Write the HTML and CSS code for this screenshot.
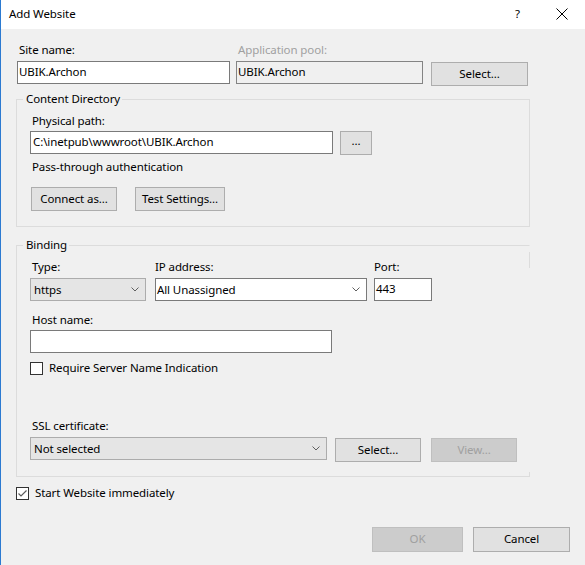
FILE: index.html
```html
<!DOCTYPE html>
<html>
<head>
<meta charset="utf-8">
<link rel="stylesheet" href="styles.css">
</head>
<body>
<div class="window">
  <div class="titlebar">
    <span class="title">Add Website</span>
    <span class="help">?</span>
    <span class="close"><svg width="12" height="12" viewBox="0 0 12 12"><path d="M0.5 0.5 L11.5 11.5 M11.5 0.5 L0.5 11.5" stroke="#000" stroke-width="1" fill="none"/></svg></span>
  </div>
  <div class="body">
    <div class="row-site">
      <div class="field f-site">
        <div class="lbl">Site name:</div>
        <div class="tb w-site">UBIK.Archon</div>
      </div>
      <div class="field f-pool">
        <div class="lbl disabled">Application pool:</div>
        <div class="tb ro w-pool">UBIK.Archon</div>
      </div>
      <div class="btn btn-pool">Select...</div>
    </div>

    <fieldset class="group g-content">
      <legend>Content Directory</legend>
      <div class="group-inner inner-content">
        <div class="lbl">Physical path:</div>
        <div class="path-row">
          <div class="tb w-path">C:\inetpub\wwwroot\UBIK.Archon</div>
          <div class="btn btn-browse">...</div>
        </div>
        <div class="lbl lbl-pass">Pass-through authentication</div>
        <div class="btn-row">
          <div class="btn btn-connect">Connect as...</div>
          <div class="btn btn-test">Test Settings...</div>
        </div>
      </div>
    </fieldset>

    <fieldset class="group g-binding">
      <legend>Binding</legend>
      <div class="group-inner inner-binding">
        <div class="bind-row">
          <div class="field f-type">
            <div class="lbl">Type:</div>
            <div class="combo dd w-type"><span class="combo-text">https</span><svg class="chev" width="8" height="5" viewBox="0 0 8 5"><path d="M0.5 0.5 L4 4 L7.5 0.5" stroke="#606060" fill="none"/></svg></div>
          </div>
          <div class="field f-ip">
            <div class="lbl lbl-tight">IP address:</div>
            <div class="combo edit w-ip"><span class="combo-text">All Unassigned</span><svg class="chev" width="8" height="5" viewBox="0 0 8 5"><path d="M0.5 0.5 L4 4 L7.5 0.5" stroke="#606060" fill="none"/></svg></div>
          </div>
          <div class="field f-port">
            <div class="lbl lbl-tight">Port:</div>
            <div class="tb w-port">443</div>
          </div>
        </div>
        <div class="lbl lbl-host">Host name:</div>
        <div class="tb w-host"></div>
        <div class="check-row check-sni">
          <span class="cb"></span>
          <span class="cb-label">Require Server Name Indication</span>
        </div>
        <div class="lbl lbl-ssl">SSL certificate:</div>
        <div class="ssl-row">
          <div class="combo dd w-ssl"><span class="combo-text">Not selected</span><svg class="chev" width="8" height="5" viewBox="0 0 8 5"><path d="M0.5 0.5 L4 4 L7.5 0.5" stroke="#606060" fill="none"/></svg></div>
          <div class="btn btn-ssl-select">Select...</div>
          <div class="btn disabled-btn btn-view">View...</div>
        </div>
      </div>
    </fieldset>

    <div class="check-row check-start">
      <span class="cb checked"><svg width="11" height="11" viewBox="0 0 11 11"><path d="M1.5 5.5 L4 8 L9.5 2.5" stroke="#5c5c5c" stroke-width="1.2" fill="none"/></svg></span>
      <span class="cb-label">Start Website immediately</span>
    </div>

    <div class="footer">
      <div class="btn disabled-btn btn-ok">OK</div>
      <div class="btn btn-cancel">Cancel</div>
    </div>
  </div>
</div>
</body>
</html>
```
FILE: styles.css
```css
* { box-sizing: border-box; }
html, body { margin: 0; padding: 0; }
body {
  font-family: "Noto Sans", "Open Sans", sans-serif;
  font-size: 11.5px;
  letter-spacing: -0.1px;
  color: #000;
  background: #f0f0f0;
}
.window {
  width: 585px;
  height: 565px;
  background: #f0f0f0;
  border-left: 1px solid #2b7ad1;
  overflow: hidden;
}
.titlebar {
  height: 29px;
  background: #fff;
  display: flex;
  align-items: center;
  padding-left: 8px;
  padding-bottom: 1px;
}
.title { line-height: 16px; }
.help { margin-left: auto; margin-right: 36px; line-height: 16px; }
.close { width: 12px; height: 12px; margin-right: 17px; display: flex; }
.close svg { display: block; }

.body { padding: 13px 0 0 15px; }

.lbl { line-height: 16px; height: 16px; white-space: nowrap; padding-left: 2px; }
.lbl.disabled { color: #a0a0a0; }
.lbl-tight { padding-left: 0; }

.tb {
  height: 23px;
  background: #fff;
  border: 1px solid #7a7a7a;
  line-height: 20px;
  padding-left: 1px;
  white-space: nowrap;
  overflow: hidden;
}
.tb.ro { background: #f0f0f0; border-color: #848484; }

.btn {
  height: 24px;
  background: #e1e1e1;
  border: 1px solid #adadad;
  text-align: center;
  line-height: 22px;
  white-space: nowrap;
}
.disabled-btn { background: #cccccc; border-color: #bfbfbf; color: #a0a0a0; }

.combo {
  height: 23px;
  display: flex;
  align-items: center;
  justify-content: space-between;
  border: 1px solid #acacac;
  background: #e5e5e5;
  padding-right: 6px;
}
.combo.edit { background: #fff; border-color: #7a7a7a; padding-left: 1px; }
.combo.dd { padding-left: 3px; }
.combo-text { line-height: 20px; }
.chev { display: block; }

/* Row 1 */
.row-site { display: flex; align-items: flex-start; padding-left: 1px; }
.field { display: flex; flex-direction: column; gap: 3px; }
.f-site { width: 213px; }
.f-pool { width: 187px; margin-left: 6px; }
.btn-pool { width: 97px; margin-left: 8px; margin-top: 20px; }

/* Group boxes */
.group {
  margin: 0;
  padding: 0;
  min-width: 0;
  border: 1px solid #dcdcdc;
  width: 514px;
}
.group legend {
  padding: 0 2px 0 3px;
  margin-left: 6px;
  line-height: 16px;
}
.group-inner { padding-left: 13px; }

.g-content { margin-top: 5px; height: 136px; }
.inner-content { padding-top: 6px; }
.path-row { display: flex; gap: 7px; margin-top: 2px; }
.w-path { width: 303px; padding-left: 2px; }
.btn-browse { width: 32px; line-height: 18px; }
.lbl-pass { margin-top: 4px; }
.btn-row { display: flex; gap: 18px; margin-top: 12px; padding-left: 1px; }
.btn-connect { width: 86px; }
.btn-test { width: 90px; }

.g-binding {
  margin-top: 10px;
  height: 240px;
  border-right-color: transparent;
  position: relative;
}
.g-binding::before {
  content: "";
  position: absolute;
  right: -1px;
  top: -1px;
  width: 1px;
  height: 16px;
  background: #dcdcdc;
}
.g-binding::after {
  content: "";
  position: absolute;
  right: -1px;
  bottom: -1px;
  width: 1px;
  height: 5px;
  background: #dcdcdc;
}
.inner-binding { padding-top: 6px; }
.bind-row { display: flex; align-items: flex-start; }
.f-type { width: 116px; }
.f-ip { width: 212px; margin-left: 9px; }
.f-port { width: 58px; margin-left: 7px; }
.lbl-host { margin-top: 11px; }
.w-host { width: 302px; margin-top: 2px; }

.check-row { display: flex; align-items: center; height: 16px; }
.cb {
  width: 13px;
  height: 13px;
  border: 1px solid #333;
  background: #fff;
  display: flex;
  align-items: center;
  justify-content: center;
}
.cb.checked svg { display: block; }
.cb-label { margin-left: 6px; line-height: 16px; }
.check-sni { margin-top: 7px; }

.lbl-ssl { margin-top: 42px; }
.ssl-row { display: flex; align-items: flex-start; margin-top: 3px; }
.w-ssl { width: 297px; }
.btn-ssl-select { width: 86px; margin-left: 8px; margin-top: 1px; }
.btn-view { width: 86px; margin-left: 10px; margin-top: 1px; }

.check-start { margin-top: 8px; }

.footer { display: flex; justify-content: flex-end; gap: 10px; margin-top: 26px; padding-right: 15px; }
.btn-ok { width: 91px; height: 25px; }
.btn-cancel { width: 97px; height: 25px; }
```
